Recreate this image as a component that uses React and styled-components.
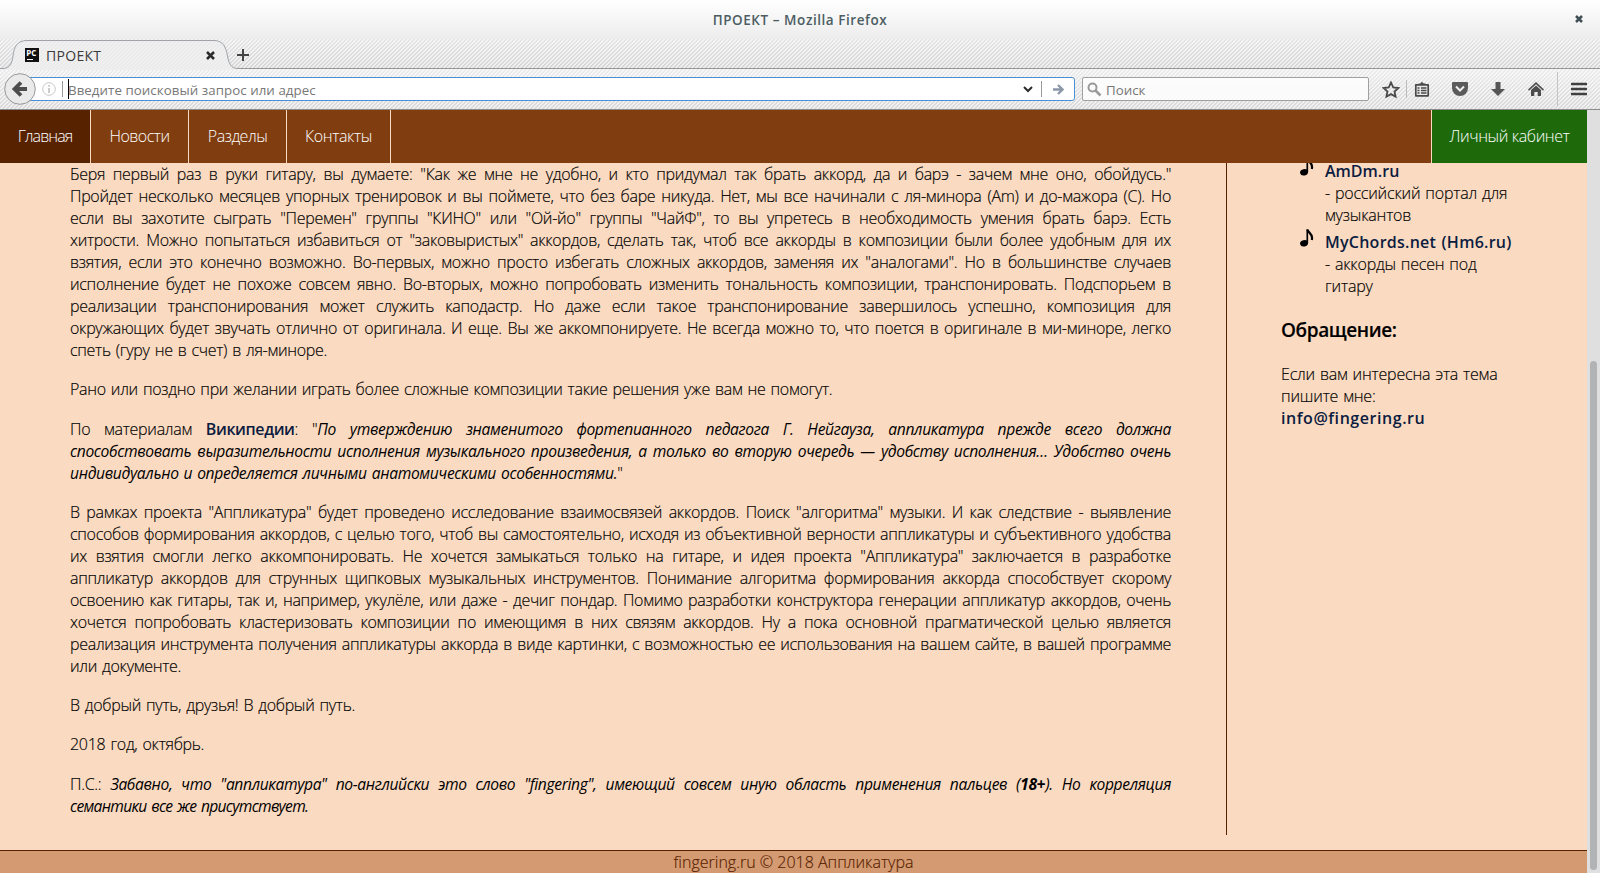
import React from "react";
import styled, { createGlobalStyle, css } from "styled-components";

const GlobalStyle = createGlobalStyle`
  * { box-sizing: border-box; }
  body { margin: 0; background: #fadac0; overflow: hidden; }
`;

const stripes = css`
  background-image:
    repeating-linear-gradient(135deg, rgba(255,255,255,.62) 0, rgba(255,255,255,.62) .9px, transparent .9px, transparent 2.828px),
    linear-gradient(${(p) => p.$from}, ${(p) => p.$to});
`;

const Window = styled.div`
  width: 1600px;
  height: 873px;
  display: flex;
  flex-direction: column;
  overflow: hidden;
  font-family: "Open Sans", "Noto Sans", sans-serif;
`;

const TitleBar = styled.header`
  position: relative;
  height: 39px;
  flex: none;
  display: flex;
  align-items: center;
  justify-content: center;
  background: linear-gradient(#fff, #ececec);
  color: #4c5d63;
  font-size: 13.5px;
  font-weight: 650;
  line-height: 18px;
  letter-spacing: 0.55px;
`;

const WindowClose = styled.svg`
  position: absolute;
  right: 17px;
  top: 15px;
`;

const TabStrip = styled.div`
  ${stripes}
  height: 30px;
  flex: none;
  display: flex;
  border-bottom: 1px solid #969696;
`;

const Tab = styled.div`
  position: relative;
  width: 236px;
  height: 30px;
  display: flex;
  align-items: center;
  padding: 2px 21px 0 25px;
  font-size: 14px;
  letter-spacing: 0.3px;
  color: #3a3a3a;
  & > * { position: relative; }
`;

const TabShape = styled.svg`
  && { position: absolute; left: 0; top: 0; }
`;

const TabTitle = styled.span`
  margin-left: 7px;
  flex: 1;
`;

const NewTab = styled.svg`
  margin: 10px 0 0 1px;
`;

const Toolbar = styled.div`
  ${stripes}
  height: 41px;
  flex: none;
  display: flex;
  align-items: flex-start;
  border-bottom: 1px solid #8b8b8b;
  padding: 8px 0 0 4px;
`;

const BackButton = styled.svg`
  flex: none;
  margin-top: -4px;
  position: relative;
  z-index: 1;
`;

const AddressBar = styled.div`
  width: 1054px;
  height: 24px;
  margin-left: -15px;
  display: flex;
  align-items: center;
  background: #fff;
  border: 1px solid #4a90d9;
  border-radius: 0 3px 3px 0;
  padding: 0 10px 0 20px;
`;

const Placeholder = styled.span`
  flex: 1;
  font-size: 13.3px;
  line-height: 20px;
  letter-spacing: ${(p) => p.$track || "0"};
  color: #777;
  padding-top: 1px;
  margin-left: ${(p) => p.$shift || "0"};
`;

const Rule = styled.i`
  flex: none;
  width: 1px;
  height: ${(p) => p.$h}px;
  margin: ${(p) => p.$m || "0"};
  background: ${(p) => p.$c || "#999"};
`;

const SearchBox = styled.div`
  width: 287px;
  height: 24px;
  margin-left: 7px;
  display: flex;
  align-items: center;
  background: rgba(255, 255, 255, 0.82);
  border: 1px solid #a0a0a0;
  border-radius: 2px;
  padding-left: 4px;
`;

const Tools = styled.div`
  flex: 1;
  height: 24px;
  display: flex;
  align-items: center;
  padding-left: 13px;
`;

const ToolIcon = styled.svg`
  flex: none;
  margin-left: ${(p) => p.$before || 0}px;
  margin-right: ${(p) => p.$gap}px;
`;

const Viewport = styled.div`
  flex: 1;
  min-height: 0;
  display: flex;
`;

const Page = styled.div`
  width: 1587px;
  display: flex;
  flex-direction: column;
  background: #fadac0;
`;

const ScrollTrack = styled.div`
  width: 13px;
  background: #dfdfdf;
  padding: 251px 3px 3px;
`;

const ScrollThumb = styled.div`
  width: 7px;
  height: 509px;
  border-radius: 4px;
  background: #b2b3b4;
`;

const Nav = styled.nav`
  position: relative;
  z-index: 1;
  height: 53px;
  flex: none;
  display: flex;
  background: #803d0f;
`;

const NavItem = styled.a`
  width: ${(p) => p.$w}px;
  line-height: 53px;
  text-align: center;
  font-size: 16px;
  font-weight: 320;
  font-stretch: 90%;
  letter-spacing: ${(p) => p.$track || "-0.5px"};
  white-space: nowrap;
  color: #fff;
  background: ${(p) => p.$bg || "transparent"};
  border-right: ${(p) => (p.$end ? "0" : "1px solid #fadac0")};
  border-left: ${(p) => (p.$end ? "1px solid #fadac0" : "0")};
  margin-left: ${(p) => (p.$end ? "auto" : "0")};
`;

const Columns = styled.div`
  height: 687px;
  flex: none;
  display: flex;
`;

const Article = styled.main`
  width: 1227px;
  height: 672px;
  padding: 0 55px 0 70px;
  border-right: 1px solid #572200;
`;

const bodyText = css`
  font-size: 16px;
  font-weight: 340;
  font-stretch: 90%;
  line-height: 22px;
  color: #000;
  -webkit-text-stroke: 0.15px currentColor;
`;

const Paragraph = styled.p`
  ${bodyText}
  margin: 0 0 17.25px;
`;

const Line = styled.span`
  display: block;
  height: 22px;
  white-space: nowrap;
  text-align: left;
  text-align-last: ${(p) => (p.$last ? "left" : "justify")};
  letter-spacing: -0.3px;
  word-spacing: ${(p) => (p.$last ? "1.2px" : "0")};
`;

const Quote = styled.em`
  font-size: 15.6px;
  line-height: 1;
  font-weight: 400;
  -webkit-text-stroke: 0;
  letter-spacing: ${(p) => p.$track || "-0.32px"};
`;

const Link = styled.a`
  font-weight: 600;
  color: #0b1c40;
  -webkit-text-stroke: 0;
  letter-spacing: ${(p) => p.$track || "0"};
`;

const Sidebar = styled.aside`
  ${bodyText}
  flex: 1;
  padding: 0 20px 0 54px;
  white-space: nowrap;
  letter-spacing: -0.2px;
  word-spacing: 1px;
`;

const LinkList = styled.ul`
  list-style: none;
  margin: -4px 0 0;
  padding: 0 0 0 19px;
`;

const LinkEntry = styled.li`
  display: flex;
  gap: 11px;
  margin-bottom: 4px;
`;

const EntryText = styled.div`
  display: flex;
  flex-direction: column;
  padding-top: 1px;
`;

const NoteMark = styled.svg`
  flex: none;
  margin-top: -2px;
`;

const Heading = styled.h3`
  margin: 19px 0 19px;
  font-size: 19px;
  line-height: 28px;
  font-weight: 600;
  font-stretch: 90%;
  letter-spacing: -0.4px;
`;

const Footer = styled.footer`
  ${bodyText}
  flex: 1;
  border-top: 1px solid #572200;
  background: #d49a72;
  color: #572200;
  text-align: center;
`;

const Note = () => (
  <NoteMark width="14" height="19" viewBox="0 0 14 19">
    <ellipse cx="4" cy="15.300" rx="4" ry="3.200" fill="#000" transform="rotate(-12 4 15)" />
    <path d="M7.300 15V1.500" stroke="#000" strokeWidth="1.700" fill="none" />
    <path d="M7.300 1.500C8 5 13.500 5.500 11.800 12" stroke="#000" strokeWidth="2.200" fill="none" />
  </NoteMark>
);

const paragraphs = [
  [
    'Беря первый раз в руки гитару, вы думаете: "Как же мне не удобно, и кто придумал так брать аккорд, да и барэ - зачем мне оно, обойдусь."',
    "Пройдет несколько месяцев упорных тренировок и вы поймете, что без баре никуда. Нет, мы все начинали с ля-минора (Am) и до-мажора (C). Но",
    'если вы захотите сыграть "Перемен" группы "КИНО" или "Ой-йо" группы "ЧайФ", то вы упретесь в необходимость умения брать барэ. Есть',
    'хитрости. Можно попытаться избавиться от "заковыристых" аккордов, сделать так, чтоб все аккорды в композиции были более удобным для их',
    'взятия, если это конечно возможно. Во-первых, можно просто избегать сложных аккордов, заменяя их "аналогами". Но в большинстве случаев',
    "исполнение будет не похоже совсем явно. Во-вторых, можно попробовать изменить тональность композиции, транспонировать. Подспорьем в",
    "реализации транспонирования может служить каподастр. Но даже если такое транспонирование завершилось успешно, композиция для",
    "окружающих будет звучать отлично от оригинала. И еще. Вы же аккомпонируете. Не всегда можно то, что поется в оригинале в ми-миноре, легко",
    "спеть (гуру не в счет) в ля-миноре.",
  ],
  ["Рано или поздно при желании играть более сложные композиции такие решения уже вам не помогут."],
  [
    <>По материалам <Link $track="-0.4px">Википедии</Link>: "<Quote>По утверждению знаменитого фортепианного педагога Г. Нейгауза, аппликатура прежде всего должна</Quote></>,
    <Quote>способствовать выразительности исполнения музыкального произведения, а только во вторую очередь — удобству исполнения… Удобство очень</Quote>,
    <><Quote>индивидуально и определяется личными анатомическими особенностями.</Quote>"</>,
  ],
  [
    'В рамках проекта "Аппликатура" будет проведено исследование взаимосвязей аккордов. Поиск "алгоритма" музыки. И как следствие - выявление',
    "способов формирования аккордов, с целью того, чтоб вы самостоятельно, исходя из объективной верности аппликатуры и субъективного удобства",
    'их взятия смогли легко аккомпонировать. Не хочется замыкаться только на гитаре, и идея проекта "Аппликатура" заключается в разработке',
    "аппликатур аккордов для струнных щипковых музыкальных инструментов. Понимание алгоритма формирования аккорда способствует скорому",
    "освоению как гитары, так и, например, укулёле, или даже - дечиг пондар. Помимо разработки конструктора генерации аппликатур аккордов, очень",
    "хочется попробовать кластеризовать композиции по имеющимя в них связям аккордов. Ну а пока основной прагматической целью является",
    "реализация инструмента получения аппликатуры аккорда в виде картинки, с возможностью ее использования на вашем сайте, в вашей программе",
    "или документе.",
  ],
  ["В добрый путь, друзья! В добрый путь."],
  ["2018 год, октябрь."],
  [
    <>П.С.: <Quote $track="-0.35px">Забавно, что "аппликатура" по-английски это слово "fingering", имеющий совсем иную область применения пальцев (<b>18+</b>). Но корреляция</Quote></>,
    <Quote $track="-0.68px">семантики все же присутствует.</Quote>,
  ],
];

export default function App() {
  return (
    <Window>
      <GlobalStyle />
      <TitleBar>
        ПРОЕКТ – Mozilla Firefox
        <WindowClose width="8" height="8" viewBox="0 0 8 8">
          <path d="M1 1l6 6M7 1L1 7" stroke="#3f4f55" strokeWidth="2.500" />
        </WindowClose>
      </TitleBar>
      <TabStrip $from="#e6e6e6" $to="#d6d6d6">
        <Tab>
          <TabShape width="238" height="31" viewBox="0 0 238 31">
            <defs>
              <pattern id="tabStripes" width="4" height="4" patternUnits="userSpaceOnUse">
                <path d="M-1 1L1-1M0 4L4 0M3 5L5 3" stroke="#fff" strokeOpacity=".6" strokeWidth=".8" />
              </pattern>
            </defs>
            <path d="M0 29.500H3C10 29.500 12 24 13 17C14 8 17 1.500 27 1.500H214C223 1.500 226 8 227.500 17C229 25 231 29.500 238 29.500V31H0Z" fill="#ebebeb" />
            <path d="M0 29.500H3C10 29.500 12 24 13 17C14 8 17 1.500 27 1.500H214C223 1.500 226 8 227.500 17C229 25 231 29.500 238 29.500V31H0Z" fill="url(#tabStripes)" />
            <path d="M0 29.500H3C10 29.500 12 24 13 17C14 8 17 1.500 27 1.500H214C223 1.500 226 8 227.500 17C229 25 231 29.500 238 29.500" fill="none" stroke="#a0a4a8" />
          </TabShape>
          <svg width="14" height="14" viewBox="0 0 14 14">
            <rect width="14" height="14" fill="#111" />
            <text x="1.300" y="7.600" fontSize="8" fontWeight="700" fill="#fff" fontFamily="Open Sans" letterSpacing="0">PC</text>
            <path d="M2 11.500h6" stroke="#fff" />
          </svg>
          <TabTitle>ПРОЕКТ</TabTitle>
          <svg width="9" height="9" viewBox="0 0 9 9">
            <path d="M1 1l7 7M8 1L1 8" stroke="#2b2b2b" strokeWidth="2.500" />
          </svg>
        </Tab>
        <NewTab width="12" height="12" viewBox="0 0 12 12">
          <path d="M6 0v12M0 6h12" stroke="#444" strokeWidth="2" />
        </NewTab>
      </TabStrip>
      <Toolbar $from="#ececec" $to="#d8d8d8">
        <BackButton width="32" height="32" viewBox="0 0 32 32">
          <circle cx="16" cy="16" r="15.300" fill="#eaeaea" stroke="#999" />
          <path d="M17 9.500L10.500 16L17 22.500M11 16H23" fill="none" stroke="#4d4d4d" strokeWidth="3.800" />
        </BackButton>
        <AddressBar>
          <svg width="14" height="14" viewBox="0 0 14 14">
            <circle cx="7" cy="7" r="6.300" fill="none" stroke="#c8c8c8" />
            <path d="M7 3v1.800M7 6v5" stroke="#c0c0c0" strokeWidth="1.600" />
          </svg>
          <Rule $h={16} $m="0 5px 0 6px" />
          <Rule $h={20} $c="#000" />
          <Placeholder $shift="-1px" $track="0.06px">Введите поисковый запрос или адрес</Placeholder>
          <svg width="10" height="7" viewBox="0 0 10 7">
            <path d="M1 1l4 4l4-4" fill="none" stroke="#2b2b2b" strokeWidth="2" />
          </svg>
          <Rule $h={16} $m="0 11px 0 8px" />
          <svg width="11" height="11" viewBox="0 0 11 11">
            <path d="M0 5.500h9M5 1l4.500 4.500L5 10" fill="none" stroke="#8b98a8" strokeWidth="2.400" />
          </svg>
        </AddressBar>
        <SearchBox>
          <svg width="15" height="15" viewBox="0 0 15 15">
            <circle cx="5.500" cy="5.500" r="4" fill="none" stroke="#999" strokeWidth="2" />
            <path d="M8.500 8.500l5 5" stroke="#999" strokeWidth="2.500" />
          </svg>
          <Placeholder $shift="4px">Поиск</Placeholder>
        </SearchBox>
        <Tools>
          <ToolIcon $gap={6} width="18" height="17" viewBox="0 0 18 17">
            <path d="M9 1.500l2.200 4.900l5.200.6l-3.900 3.500l1.100 5.200L9 13.100l-4.600 2.600l1.100-5.200L1.600 7l5.200-.6z" fill="none" stroke="#4a4a4a" strokeWidth="1.800" />
          </ToolIcon>
          <Rule $h={18} $c="#bbb" />
          <ToolIcon $before={7} $gap={22} width="16" height="16" viewBox="0 0 16 16">
            <path d="M1.800 3.800h12.400v11H1.800z" fill="#e8e8e8" stroke="#4a4a4a" strokeWidth="1.700" strokeLinejoin="round" />
            <path d="M4.500 4V2.500h1.800L8 .8l1.700 1.700h1.800V4z" fill="#4a4a4a" />
            <path d="M3.500 7h2M7 7h5.500M3.500 9.500h2M7 9.500h5.500M3.500 12h2M7 12h5.500" stroke="#4a4a4a" strokeWidth="1.300" />
          </ToolIcon>
          <ToolIcon $gap={23} width="16" height="16" viewBox="0 0 16 16">
            <path d="M1 1h14a1 1 0 0 1 1 1v5a8 8 0 0 1-16 0V2a1 1 0 0 1 1-1z" fill="#5a5a5a" />
            <path d="M4 5.500L8 9.500L12 5.500" fill="none" stroke="#eee" strokeWidth="2" />
          </ToolIcon>
          <ToolIcon $gap={23} width="14" height="16" viewBox="0 0 14 16">
            <path d="M4.500 1h5v7H14l-7 7L0 8h4.500z" fill="#555" />
          </ToolIcon>
          <ToolIcon $gap={13} width="16" height="16" viewBox="0 0 16 16">
            <path d="M0 8.500L8 1l8 7.500l-1 1.200L8 3.200L1 9.700zM8 4.600l5 4.500V15H9.700v-4H6.300v4H3V9.100z" fill="#4d4d4d" />
          </ToolIcon>
          <Rule $h={34} $c="#c4c4c4" />
          <ToolIcon $before={13} $gap={0} width="16" height="14" viewBox="0 0 16 14">
            <path d="M1 2h14M1 7h14M1 12h14" stroke="#404040" strokeWidth="2.600" strokeLinecap="round" />
          </ToolIcon>
        </Tools>
      </Toolbar>
      <Viewport>
        <Page>
          <Nav>
            <NavItem $w={91} $bg="#572200" $track="-0.9px">Главная</NavItem>
            <NavItem $w={98}>Новости</NavItem>
            <NavItem $w={98}>Разделы</NavItem>
            <NavItem $w={104} $track="-0.4px">Контакты</NavItem>
            <NavItem $w={156} $end $bg="#1e6a0b" $track="-0.38px">Личный кабинет</NavItem>
          </Nav>
          <Columns>
            <Article>
              {paragraphs.map((lines, i) => (
                <Paragraph key={i}>
                  {lines.map((line, j) => (
                    <Line key={j} $last={j === lines.length - 1}>{line}</Line>
                  ))}
                </Paragraph>
              ))}
            </Article>
            <Sidebar>
              <LinkList>
                <LinkEntry>
                  <Note />
                  <EntryText>
                    <Link>AmDm.ru</Link>
                    <span>- российский портал для</span>
                    <span>музыкантов</span>
                  </EntryText>
                </LinkEntry>
                <LinkEntry>
                  <Note />
                  <EntryText>
                    <Link $track="0.25px">MyChords.net (Hm6.ru)</Link>
                    <span>- аккорды песен под</span>
                    <span>гитару</span>
                  </EntryText>
                </LinkEntry>
              </LinkList>
              <Heading>Обращение:</Heading>
              <div>Если вам интересна эта тема</div>
              <div>пишите мне:</div>
              <Link $track="0.55px">info@fingering.ru</Link>
            </Sidebar>
          </Columns>
          <Footer>fingering.ru © 2018 Аппликатура</Footer>
        </Page>
        <ScrollTrack>
          <ScrollThumb />
        </ScrollTrack>
      </Viewport>
    </Window>
  );
}
